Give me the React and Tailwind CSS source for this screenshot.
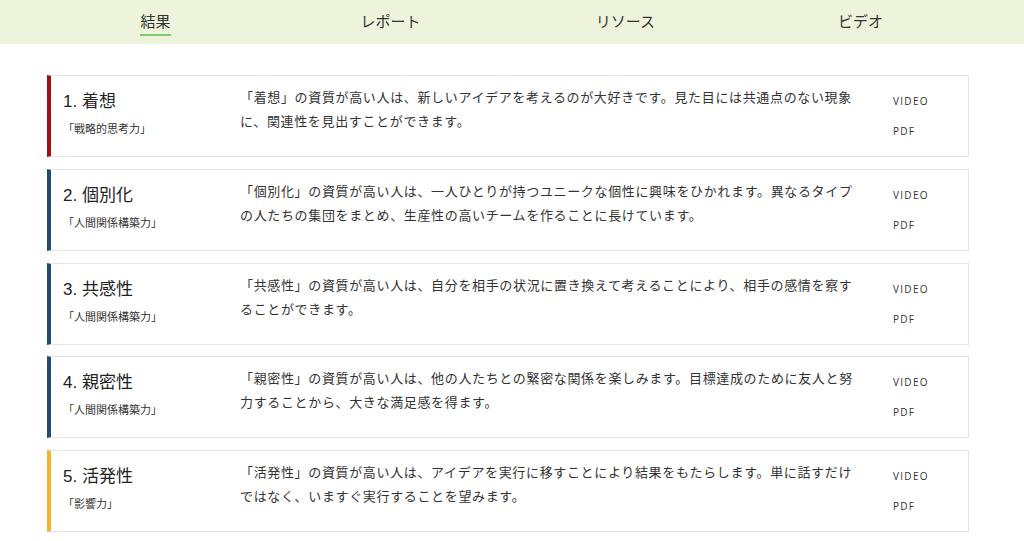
const tabs = ["結果", "レポート", "リソース", "ビデオ"];

const strengths = [
  {
    no: 1,
    name: "着想",
    domain: "「戦略的思考力」",
    bar: "border-l-[#a30d16]",
    text: "「着想」の資質が高い人は、新しいアイデアを考えるのが大好きです。見た目には共通点のない現象に、関連性を見出すことができます。",
  },
  {
    no: 2,
    name: "個別化",
    domain: "「人間関係構築力」",
    bar: "border-l-[#234a72]",
    text: "「個別化」の資質が高い人は、一人ひとりが持つユニークな個性に興味をひかれます。異なるタイプの人たちの集団をまとめ、生産性の高いチームを作ることに長けています。",
  },
  {
    no: 3,
    name: "共感性",
    domain: "「人間関係構築力」",
    bar: "border-l-[#234a72]",
    text: "「共感性」の資質が高い人は、自分を相手の状況に置き換えて考えることにより、相手の感情を察することができます。",
  },
  {
    no: 4,
    name: "親密性",
    domain: "「人間関係構築力」",
    bar: "border-l-[#234a72]",
    text: "「親密性」の資質が高い人は、他の人たちとの緊密な関係を楽しみます。目標達成のために友人と努力することから、大きな満足感を得ます。",
  },
  {
    no: 5,
    name: "活発性",
    domain: "「影響力」",
    bar: "border-l-[#f5b335]",
    text: "「活発性」の資質が高い人は、アイデアを実行に移すことにより結果をもたらします。単に話すだけではなく、いますぐ実行することを望みます。",
  },
];

const font = {
  fontFamily: '"Liberation Sans", "Noto Sans CJK JP", sans-serif',
};

const StrengthCard = ({ s }) => (
  <div
    className={`flex h-[82px] border border-[#e4e4e4] border-l-4 ${s.bar} bg-white`}
  >
    <div className="w-[189px] shrink-0 pl-[12px] pt-[14px]">
      <div className="text-[17px] leading-[24px] text-[#222]">
        {s.no}. {s.name}
      </div>
      <div className="mt-[7px] text-[11px] leading-[16px] text-[#333]">
        {s.domain}
      </div>
    </div>
    <div className="w-[622px] shrink-0 pt-[10px] text-[13px] leading-[24px] tracking-[0.65px] text-[#333]">
      {s.text}
    </div>
    <div className="ml-[31px] flex flex-col pt-[18px] font-['Open_Sans'] text-[10px] font-medium tracking-[1.3px] text-[#333]">
      <span className="leading-[14px]">VIDEO</span>
      <span className="mt-[16px] leading-[14px]">PDF</span>
    </div>
  </div>
);

export default function App() {
  return (
    <div className="min-h-[541px] bg-white" style={font}>
      <nav className="h-[44px] bg-[#eef4dc]">
        <div className="ml-[38px] grid h-full w-[940px] grid-cols-4">
          {tabs.map((t, i) => (
            <div key={t} className="flex items-center justify-center">
              <span className="relative text-[15px] leading-[20px] text-[#333]">
                {t}
                {i === 0 && (
                  <span className="absolute left-0 right-0 top-[22px] h-[2px] bg-[#7dcb6b]" />
                )}
              </span>
            </div>
          ))}
        </div>
      </nav>
      <div className="ml-[47px] flex w-[922px] flex-col gap-[11.75px] pt-[31px]">
        {strengths.map((s) => (
          <StrengthCard key={s.no} s={s} />
        ))}
      </div>
    </div>
  );
}
